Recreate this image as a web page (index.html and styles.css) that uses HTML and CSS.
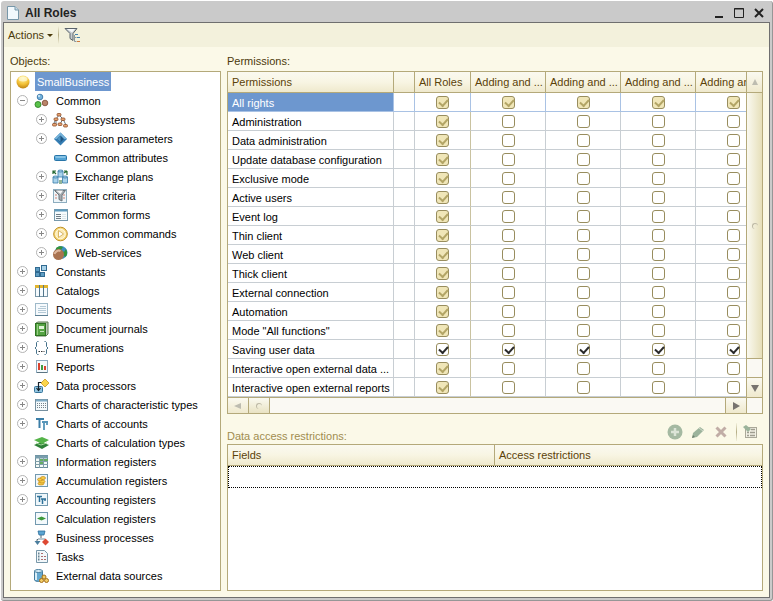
FILE: index.html
```
<!DOCTYPE html>
<html lang="en"><head>
<meta charset="utf-8">
<meta name="viewport" content="width=device-width, initial-scale=1">
<title>All Roles</title>
<link rel="stylesheet" href="styles.css"></head>

<body>
<div class="window">
<header class="titlebar">
	<svg class="icon" viewBox="0 0 16 16"><path d="M2.500 1.500h7.500l3.500 3.500v9.500h-11z" fill="#f2f9fd" stroke="#7797a9"/><path d="M10 1.500v3.500h3.500" fill="#c5dce9" stroke="#7797a9"/></svg>
	<h1>All Roles</h1>
	<button class="win-button" aria-label="Minimize"><svg viewBox="0 0 12 12"><path d="M2 10h8" stroke="#222" stroke-width="2"/></svg></button>
	<button class="win-button" aria-label="Maximize"><svg viewBox="0 0 12 12"><path d="M1.500 1.500h9v9h-9zM1 2h10" fill="none" stroke="#222"/></svg></button>
	<button class="win-button" aria-label="Close"><svg viewBox="0 0 12 12"><path d="M2 2l8 8M10 2l-8 8" stroke="#222" stroke-width="2"/></svg></button>
</header>

<div class="toolbar">
	<button class="menu-button">Actions <span class="caret"></span></button>
	<span class="separator"></span>
	<button class="tool" aria-label="Filter by subsystems"><svg class="icon" viewBox="0 0 16 16"><path d="M1 1.500h12L9 6.500v7l-3-2v-5z" fill="#c6ccd0" stroke="#59626a"/><path d="M3 2h8L8 5.500z" fill="#f6f8f9"/><path d="M10.500 8v6.500M10.500 10.500h2M10.500 14.500h2" stroke="#8b979d" fill="none"/><path d="M11 7.500h3M13 10.500h3" stroke="#4583b0"/><path d="M13 14.500h3" stroke="#d07a3c"/></svg></button>
</div>

<main class="content">
<section class="objects">
	<h2 class="caption">Objects:</h2>
	<ul class="tree">
	<li class="node root"><svg class="icon" viewBox="0 0 16 16"><defs><radialGradient id="gold" cx=".5" cy=".2" r=".8"><stop offset="0" stop-color="#fff6ae"/><stop offset=".6" stop-color="#f3c136"/><stop offset="1" stop-color="#bd8213"/></radialGradient></defs><circle cx="8" cy="8" r="6.500" fill="url(#gold)"/><ellipse cx="8" cy="5" rx="4.500" ry="2.500" fill="#fffbdc" opacity=".7"/></svg><span class="label selected">SmallBusiness</span></li>
	<li class="node"><button class="expander open" aria-label="Collapse"></button><svg class="icon" viewBox="0 0 16 16"><circle cx="7" cy="4" r="2.800" fill="#75b3dc" stroke="#2c6b9e" stroke-width=".8"/><circle cx="5" cy="11.500" r="3" fill="#5ac24a" stroke="#237a1c" stroke-width=".8"/><circle cx="12" cy="10" r="2.800" fill="#b98469" stroke="#7c4a33" stroke-width=".8"/><circle cx="6" cy="3" r="1" fill="#d7edfa"/></svg><span class="label">Common</span></li>
	<li class="node sub"><button class="expander" aria-label="Expand"></button><svg class="icon" viewBox="0 0 16 16"><path d="M7 3L4 7v6M7 3l4 4M4 7L1.500 12M8 12l3-5 3 6" fill="none" stroke="#69747c"/><g fill="#e5a373" stroke="#8f4c26" stroke-width=".8"><rect x="5" y="1.500" width="4" height="2.500" rx="1"/><rect x="2" y="6" width="4" height="2.500" rx="1"/><rect x="9" y="6" width="4" height="2.500" rx="1"/><rect x=".5" y="11.500" width="4" height="2.500" rx="1"/><rect x="6" y="11" width="4" height="2.500" rx="1"/><rect x="11.500" y="12.500" width="4" height="2.500" rx="1"/></g></svg><span class="label">Subsystems</span></li>
	<li class="node sub"><button class="expander" aria-label="Expand"></button><svg class="icon" viewBox="0 0 16 16"><path d="M8.500 1.500L15 8l-6.500 6.500L2 8z" fill="#347db3"/><path d="M8.500 1.500L15 8H2z" fill="#74b2d9"/><path d="M8.500 4.500L12 8l-3.500 3.500L5 8z" fill="#1d5483"/><path d="M8.500 5v6L5 8z" fill="#4c93c3"/></svg><span class="label">Session parameters</span></li>
	<li class="node sub"><span class="expander-space"></span><svg class="icon" viewBox="0 0 16 16"><rect x="2.500" y="5.500" width="12" height="5" rx="1" fill="#54a4d5" stroke="#2875a8"/><path d="M3.500 7h10" stroke="#b9e1f5"/></svg><span class="label">Common attributes</span></li>
	<li class="node sub"><button class="expander" aria-label="Expand"></button><svg class="icon" viewBox="0 0 16 16"><g fill="#a9d3eb" stroke="#397ba8" stroke-width=".8"><path d="M6 2v6h5V2z"/><ellipse cx="8.500" cy="2" rx="2.500" ry="1"/><path d="M1 8v6h5V8z"/><ellipse cx="3.500" cy="8" rx="2.500" ry="1"/><path d="M10.500 8v6h5V8z"/><ellipse cx="13" cy="8" rx="2.500" ry="1"/></g><path d="M1 5V2h3M1 2l3 3M15 2v4M12 2h3M12 4l3-2M7 12h3M7 14h3" fill="none" stroke="#276b35" stroke-width="1.200"/></svg><span class="label">Exchange plans</span></li>
	<li class="node sub"><button class="expander" aria-label="Expand"></button><svg class="icon" viewBox="0 0 16 16"><rect x="1.500" y="1.500" width="13" height="13" fill="#edf5f9" stroke="#8dadbf"/><path d="M3 7h2M3 10h2M11 7h2M11 10h2" stroke="#d18274"/><path d="M2.500 2.500h11L10 7v6l-3-1.500V7z" fill="#a4abb0" stroke="#6c757b"/><path d="M4 2.500h7L8.500 6z" fill="#f5f6f7"/></svg><span class="label">Filter criteria</span></li>
	<li class="node sub"><button class="expander" aria-label="Expand"></button><svg class="icon" viewBox="0 0 16 16"><rect x="2.500" y="2.500" width="13" height="11" fill="#f5fafc" stroke="#7799ac"/><path d="M3 3.500h12" stroke="#5c9abf" stroke-width="2"/><path d="M4 7.500h5M4 9.500h5M4 11.500h5" stroke="#707d86"/><path d="M10 7.500h4M10 9.500h4M10 11.500h4" stroke="#dbe5ea"/></svg><span class="label">Common forms</span></li>
	<li class="node sub"><button class="expander" aria-label="Expand"></button><svg class="icon" viewBox="0 0 16 16"><circle cx="8.500" cy="8" r="6.800" fill="#f7d97a" stroke="#bf9028"/><circle cx="8.500" cy="8" r="4.800" fill="#fbeab5" stroke="#fff9df"/><path d="M6.500 4.500L11.500 8l-5 3.500z" fill="#fff" stroke="#d9b765"/></svg><span class="label">Common commands</span></li>
	<li class="node sub"><button class="expander" aria-label="Expand"></button><svg class="icon" viewBox="0 0 16 16"><circle cx="9" cy="7.500" r="6.500" fill="#3d8fc4"/><path d="M4 3c3-2 5-2 7-1l-2 3 3 2 2-3c2 4 1 7-1 8l-3-4-6-2z" fill="#36943b"/><circle cx="6.500" cy="9.500" r="5.500" fill="#a9724f"/><path d="M2.500 9c1-3 4-4 6-3" stroke="#dfb79c" stroke-width="2" fill="none"/></svg><span class="label">Web-services</span></li>
	<li class="node"><button class="expander" aria-label="Expand"></button><svg class="icon" viewBox="0 0 16 16"><g fill="#5f9dc2" stroke="#316a91"><rect x="2.500" y="3.500" width="4" height="4"/><rect x="2.500" y="8.500" width="4" height="4"/><rect x="7.500" y="8.500" width="4" height="4"/></g><rect x="8.500" y="1.500" width="5" height="5" fill="#a9d2e8" stroke="#316a91"/></svg><span class="label">Constants</span></li>
	<li class="node"><button class="expander" aria-label="Expand"></button><svg class="icon" viewBox="0 0 16 16"><rect x="2.500" y="2.500" width="12" height="11" fill="#f5fafd" stroke="#7896a7"/><path d="M2 3.500h13" stroke="#e3b52d" stroke-width="3"/><path d="M6.500 2v12M10.500 2v12" stroke="#52768c"/></svg><span class="label">Catalogs</span></li>
	<li class="node"><button class="expander" aria-label="Expand"></button><svg class="icon" viewBox="0 0 16 16"><rect x="2.500" y="1.500" width="12" height="12" fill="#f6fafd" stroke="#9eb9c9"/><path d="M7 4.500h6M5 6.500h8M5 8.500h8M5 10.500h8" stroke="#b4c9d6"/><path d="M2 13.500h13" stroke="#5c7e92"/></svg><span class="label">Documents</span></li>
	<li class="node"><button class="expander" aria-label="Expand"></button><svg class="icon" viewBox="0 0 16 16"><path d="M3 2l2-1h10v12l-2 2H3z" fill="#bccab5" stroke="#5c7d52"/><rect x="2.500" y="2.500" width="10" height="12" fill="#56a344" stroke="#2e7422"/><path d="M4.500 3v11" stroke="#95ce82"/><rect x="6" y="5" width="5" height="3" fill="#e1f3d9"/><path d="M7 10.500h4" stroke="#c6e6bc"/></svg><span class="label">Document journals</span></li>
	<li class="node"><button class="expander" aria-label="Expand"></button><svg class="icon" viewBox="0 0 16 16"><path d="M5.500 1.500h-1l-1 1v4L2 8l1.500 1.500v4l1 1h1M11.500 1.500h1l1 1v4L15 8l-1.500 1.500v4l-1 1h-1" fill="none" stroke="#47728b"/><path d="M5.500 11.500h1.500M8 11.500h1.500M10.500 11.500h1" stroke="#333"/></svg><span class="label">Enumerations</span></li>
	<li class="node"><button class="expander" aria-label="Expand"></button><svg class="icon" viewBox="0 0 16 16"><rect x="3.500" y="1.500" width="11" height="12" fill="#f4f9fc" stroke="#8daabd"/><path d="M6 4v7M12 7v4" stroke="#d9432f" stroke-width="2"/><path d="M9 6v5" stroke="#419c42" stroke-width="2"/><path d="M4 13.500h10" stroke="#5b7482"/></svg><span class="label">Reports</span></li>
	<li class="node"><button class="expander" aria-label="Expand"></button><svg class="icon" viewBox="0 0 16 16"><rect x="1.500" y="8.500" width="8" height="6" rx="1" fill="#92c5e1" stroke="#35749b"/><path d="M5.500 4v8M3.500 10l2 2.500 2-2.500M5.500 4.500H9" fill="none" stroke="#16222a" stroke-width="1.200"/><path d="M12 1l4 4-4 4-4-4z" fill="#fbd54b" stroke="#c79924" stroke-width=".8"/></svg><span class="label">Data processors</span></li>
	<li class="node"><button class="expander" aria-label="Expand"></button><svg class="icon" viewBox="0 0 16 16"><rect x="2.500" y="2.500" width="12" height="11" fill="#f4f9fb" stroke="#7690a0"/><path d="M3 3.500h11" stroke="#7eabc5" stroke-width="2"/><path d="M4.500 6v6M6.500 6v6M8.500 6v6M10.500 6v6M12.500 6v6" stroke="#75828a" stroke-dasharray="1 1"/></svg><span class="label">Charts of characteristic types</span></li>
	<li class="node"><button class="expander" aria-label="Expand"></button><svg class="icon" viewBox="0 0 16 16"><path d="M3 3h8M6.500 3v9" stroke="#3c7ea7" stroke-width="2" fill="none"/><path d="M9 6h6M11 6v8M14 6v3" stroke="#5795b8" stroke-width="1.800" fill="none"/></svg><span class="label">Charts of accounts</span></li>
	<li class="node"><span class="expander-space"></span><svg class="icon" viewBox="0 0 16 16"><path d="M1 10l7-3 8 3-7 4z" fill="#2e8038"/><path d="M1 5l8-3 7 3-7 4z" fill="#55b449"/><path d="M3 8l5 2 6-2" fill="none" stroke="#a3d699"/></svg><span class="label">Charts of calculation types</span></li>
	<li class="node"><button class="expander" aria-label="Expand"></button><svg class="icon" viewBox="0 0 16 16"><rect x="2.500" y="1.500" width="12" height="12" fill="#f4faf7" stroke="#6b8d9c"/><path d="M2 3h13" stroke="#779dad" stroke-width="3"/><path d="M6 5h9v3h-4v3H7z" fill="#65ae61"/><path d="M6.500 2v12M10.500 2v12M2 7.500h13M2 10.500h13" stroke="#819fa9"/></svg><span class="label">Information registers</span></li>
	<li class="node"><button class="expander" aria-label="Expand"></button><svg class="icon" viewBox="0 0 16 16"><rect x="2.500" y="1.500" width="12" height="12" fill="#eff7fb" stroke="#7299af"/><g fill="#f8cf4b" stroke="#c28516" stroke-width=".7"><ellipse cx="8" cy="10.500" rx="3" ry="1.500"/><ellipse cx="9" cy="8.500" rx="3" ry="1.500"/><ellipse cx="7" cy="6.500" rx="2.500" ry="1.500"/><ellipse cx="10" cy="5" rx="2.500" ry="1.500"/></g></svg><span class="label">Accumulation registers</span></li>
	<li class="node"><button class="expander" aria-label="Expand"></button><svg class="icon" viewBox="0 0 16 16"><rect x="2.500" y="1.500" width="12" height="12" fill="#eff7fb" stroke="#7299af"/><path d="M4 4.500h5M6.500 4v6M8 7h5M9.500 7v5M12 7v2" stroke="#2e7199" stroke-width="1.500" fill="none"/></svg><span class="label">Accounting registers</span></li>
	<li class="node"><span class="expander-space"></span><svg class="icon" viewBox="0 0 16 16"><rect x="2.500" y="1.500" width="12" height="12" fill="#f3f9fc" stroke="#7299af"/><path d="M4 7.500l4.500-2 4.500 2-4.500 2z" fill="#3e9a3c"/></svg><span class="label">Calculation registers</span></li>
	<li class="node"><span class="expander-space"></span><svg class="icon" viewBox="0 0 16 16"><path d="M8 5v4M4 12V9.500h8V12" fill="none" stroke="#53646e"/><path d="M5 1h7l-1 4H6z" fill="#5ba5d2" stroke="#2c6c99" stroke-width=".8"/><path d="M5 8h7v2H5z" fill="#bac7cf"/><path d="M1.500 11h6l-3 4z" fill="#4a7d9d"/><path d="M12.500 8.500l3.500 3.500-3.500 3.500L9 12z" fill="#dd4933"/></svg><span class="label">Business processes</span></li>
	<li class="node"><span class="expander-space"></span><svg class="icon" viewBox="0 0 16 16"><path d="M3.500 1.500h8l3 3v9h-11z" fill="#f2f8fb" stroke="#7897a9"/><path d="M5 4.500h1.500M5 7.500h1.500M5 10.500h1.500" stroke="#6a8492" stroke-width="2"/><path d="M8 4.500h2M8 7.500h5M8 10.500h5" stroke="#ad6e6e" stroke-dasharray="2 1"/></svg><span class="label">Tasks</span></li>
	<li class="node"><span class="expander-space"></span><svg class="icon" viewBox="0 0 16 16"><path d="M1.500 3v9c1 2 7 2 8 0V3z" fill="#66a9d0" stroke="#467c9d"/><path d="M3 4v8" stroke="#d9eef8" stroke-width="2"/><ellipse cx="5.500" cy="3" rx="4" ry="1.500" fill="#d8edf7" stroke="#467c9d"/><g fill="#f2cd67" stroke="#a66f17"><circle cx="11" cy="9" r="2"/><circle cx="8.500" cy="12.500" r="2"/><circle cx="13.500" cy="12.500" r="2"/></g></svg><span class="label">External data sources</span></li>
	</ul>
</section>

<section class="rights">
	<h2 class="caption">Permissions:</h2>
	<div class="grid-frame">
		<div class="grid-clip">
		<table class="permissions">
			<colgroup><col class="col-name"><col class="col-gap"><col class="col-all"><col class="col-role"><col class="col-role"><col class="col-role"><col class="col-role"></colgroup>
			<thead><tr><th>Permissions</th><th></th><th>All Roles</th><th>Adding and ...</th><th>Adding and ...</th><th>Adding and ...</th><th>Adding and ...</th></tr></thead>
			<tbody id="permissionRows"></tbody>
		</table>
		</div>
		<div class="vscroll">
			<button class="scroll-button up" aria-label="Scroll up"><svg viewBox="0 0 8 8"><path d="M4 1l3 6H1z" fill="#bdbcb0"/></svg></button>
			<div class="vthumb"></div>
			<button class="scroll-button down" aria-label="Scroll down"><svg viewBox="0 0 8 8"><path d="M0 1h8L4 8z" fill="#77736f"/></svg></button>
		</div>
		<div class="hscroll">
			<button class="scroll-button" aria-label="Scroll left"><svg viewBox="0 0 8 8"><path d="M0 4l7-3v6z" fill="#bdbcb0"/></svg></button>
			<div class="hthumb"></div>
			<button class="scroll-button right" aria-label="Scroll right"><svg viewBox="0 0 8 8"><path d="M8 4L1 0v8z" fill="#77736f"/></svg></button>
		</div>
		<div class="corner"></div>
	</div>

	<div class="restrictions-bar">
		<h2 class="caption muted">Data access restrictions:</h2>
		<button class="tool" aria-label="Add" disabled><svg class="icon" viewBox="0 0 16 16"><circle cx="8" cy="8" r="7.500" fill="#a5b9a2"/><path d="M8 4v8M4 8h8" stroke="#dce4d7" stroke-width="2.500"/></svg></button>
		<button class="tool" aria-label="Edit" disabled><svg class="icon" viewBox="0 0 16 16"><path d="M3 9l7-6 4 3-7 7-5 1z" fill="#9cb39c"/><path d="M9 4l4 3" stroke="#d3dccd"/><path d="M2 14l1-3 2 2z" fill="#70806f"/></svg></button>
		<button class="tool" aria-label="Delete" disabled><svg class="icon" viewBox="0 0 16 16"><path d="M3.500 3.500l9 9M12.500 3.500l-9 9" stroke="#c1ada6" stroke-width="3"/></svg></button>
		<span class="separator"></span>
		<button class="tool" aria-label="Restriction templates" disabled><svg class="icon" viewBox="0 0 16 16"><rect x="3.500" y="3.500" width="11" height="10" fill="#f2f1e5" stroke="#aaa899"/><path d="M9 5.500h4M5 8.500h2M8 8.500h5M5 11.500h2M8 11.500h5" stroke="#9f9d90" stroke-width="1.500"/><path d="M1 3l3-2 5 4-3 3z" fill="#9bb39b"/></svg></button>
	</div>

	<div class="restrictions">
	<table>
		<thead><tr><th>Fields</th><th>Access restrictions</th></tr></thead>
		<tbody><tr><td colspan="2"></td></tr></tbody>
	</table>
	</div>
</section>
</main>
</div>

<script src="script.js"></script>
</body>
</html>
```
FILE: script.js
```
var ROLE_COLUMNS = 5;

// "own" rights are set by every role and can be edited
var permissions = [
	{ name: "All rights", selected: true },
	{ name: "Administration" },
	{ name: "Data administration" },
	{ name: "Update database configuration" },
	{ name: "Exclusive mode" },
	{ name: "Active users" },
	{ name: "Event log" },
	{ name: "Thin client" },
	{ name: "Web client" },
	{ name: "Thick client" },
	{ name: "External connection" },
	{ name: "Automation" },
	{ name: "Mode \"All functions\"" },
	{ name: "Saving user data", own: true },
	{ name: "Interactive open external data ..." },
	{ name: "Interactive open external reports" }
];

// build one checkbox of a permission row
function makeCheck(right, column) {
	var box = document.createElement("input");
	box.type = "checkbox";
	box.className = "check";
	box.setAttribute("aria-label", right.name + ", role " + (column + 1));
	box.checked = column == 0 || right.selected || right.own;
	if (!right.own && box.checked)
		box.className += " partial";
	return box;
}

var body = document.getElementById("permissionRows");
permissions.forEach(function (right) {
	var row = body.insertRow();
	if (right.selected)
		row.className = "current";
	row.insertCell().textContent = right.name;
	row.insertCell();
	for (var i = 0; i < ROLE_COLUMNS; i++)
		row.insertCell().appendChild(makeCheck(right, i));
});
```
FILE: styles.css
```
* {
	box-sizing: border-box;
}
body {
	margin: 0;
	padding: 1px 0 0 1px;
	height: 100vh;
	background: #fff;
	color: #000;
	font: 11px/18px "Liberation Sans", Arial, sans-serif;
}
button {
	padding: 0;
	border: 0;
	background: none;
	font: inherit;
	color: inherit;
}
h1, h2 {
	margin: 0;
}
svg {
	display: block;
}
.icon {
	width: 16px;
	height: 16px;
	flex: none;
}

/* window frame */
.window {
	display: flex;
	flex-direction: column;
	min-height: 100%;
	padding: 0 2px 2px;
	background: #cacaca;
	border-right: 1px solid #969696;
	border-bottom: 1px solid #969696;
	border-radius: 3px;
}
.titlebar {
	display: flex;
	align-items: center;
	gap: 8px;
	height: 21px;
	padding: 2px 5px 0 2px;
}
.titlebar h1 {
	flex: 1;
	margin-left: -4px;
	font-size: 12px;
	color: #222;
}
.win-button {
	width: 12px;
	height: 12px;
}
.toolbar {
	display: flex;
	align-items: center;
	gap: 5px;
	height: 25px;
	padding-left: 4px;
	background: #f3f1dc;
	border: 1px solid #6f6f6f;
	border-bottom: 0;
	color: #4b3a0b;
}
.menu-button {
	display: flex;
	align-items: center;
	gap: 3px;
}
.caret {
	border: 3px solid transparent;
	border-top-color: #4b3a0b;
	border-bottom: 0;
}
.separator {
	width: 1px;
	height: 18px;
	background: linear-gradient(#f3f1dc, #b5ad85, #f3f1dc);
}

.content {
	display: flex;
	flex: 1;
	gap: 6px;
	padding: 5px 6px 6px;
	background: #fbf9e8;
	border: 1px solid #6f6f6f;
	border-top: 0;
}
.caption {
	font-size: 11px;
	line-height: 18px;
	font-weight: normal;
	color: #4b3a0b;
}
.objects > .caption, .rights > .caption {
	height: 19px;
}
.rights .muted {
	flex: 1;
	color: #a08c4f;
}

/* configuration tree */
.objects {
	display: flex;
	flex-direction: column;
	width: 211px;
}
.tree {
	flex: 1;
	margin: 0;
	padding: 0;
	list-style: none;
	background: #fff;
	border: 1px solid #b4a97a;
}
.node {
	display: flex;
	align-items: center;
	gap: 5px;
	height: 19px;
	padding-left: 6px;
}
.node.sub {
	padding-left: 25px;
}
.node.root {
	padding-left: 4px;
	gap: 4px;
}
.label {
	padding: 1px 2px 0;
	line-height: 18px;
	white-space: nowrap;
}
.selected {
	background: #6d97cf;
	color: #fff;
}
.expander, .expander-space {
	width: 11px;
	height: 11px;
	flex: none;
}
.expander {
	display: grid;
	place-items: center;
}
/* round box with a plus or a minus */
.expander::before {
	content: "";
	width: 9px;
	height: 9px;
	border: 1px solid #b4b4b4;
	border-radius: 50%;
	background:
		linear-gradient(#888, #888) center / 5px 1px no-repeat,
		linear-gradient(#888, #888) center / 1px 5px no-repeat;
}
.expander.open::before {
	background: linear-gradient(#888, #888) center / 5px 1px no-repeat;
}

/* permissions grid */
.rights {
	display: flex;
	flex-direction: column;
	flex: 1;
	min-width: 0;
}
.grid-frame {
	display: grid;
	grid-template-columns: minmax(0, 1fr) 16px;
	grid-template-rows: auto 16px;
	border: 1px solid #b4a97a;
	background: #fff;
}
.grid-clip {
	overflow: hidden;
}
table {
	border-collapse: separate;
	border-spacing: 0;
	table-layout: fixed;
}
th {
	height: 21px;
	padding: 0 0 0 4px;
	background: linear-gradient(#faf9f0, #f8f5e3 50%, #efe9cd);
	border-right: 1px solid #b4a97a;
	border-bottom: 1px solid #b4a97a;
	color: #5b4208;
	font-weight: normal;
	text-align: left;
	white-space: nowrap;
}
.permissions {
	width: 543px;
}
.col-name { width: 166px; }
.col-gap { width: 21px; }
.col-all { width: 56px; }
.col-role { width: 75px; }
.permissions td {
	height: 19px;
	padding: 0;
	border-right: 1px solid #c8ced3;
	border-bottom: 1px solid #c8ced3;
	line-height: 16px;
	text-align: center;
	white-space: nowrap;
}
.permissions td:first-child {
	padding: 2px 0 0 4px;
	text-align: left;
}
.permissions td:nth-child(3) {
	border-right-color: #c9c2a0;
}
.permissions .current td {
	border-color: #a9c2e4;
}
.permissions .current td:first-child {
	background: #6d97cf;
	color: #fff;
}
.check {
	appearance: none;
	display: block;
	width: 13px;
	height: 13px;
	margin: 0 auto;
	border: 1px solid #988d5e;
	border-radius: 3px;
	background: #fff;
}
.check:checked::before {
	content: "";
	display: block;
	width: 7px;
	height: 4px;
	margin: 2px 0 0 2px;
	border: 2px solid #2b2b2b;
	border-top: 0;
	border-right: 0;
	transform: rotate(-48deg);
}
.check.partial {
	background: #f0e6b8;
}
.check.partial:checked::before {
	border-color: #b3a566;
}

/* scrollbars */
.scroll-button {
	display: grid;
	place-items: center;
	background: linear-gradient(#faf9f0, #efe9cd);
}
.scroll-button svg {
	width: 8px;
	height: 8px;
}
.vscroll {
	display: flex;
	flex-direction: column;
	border-left: 1px solid #b4a97a;
	background: #faf9f3;
}
.up {
	height: 21px;
	border-bottom: 1px solid #b4a97a;
}
.down {
	height: 20px;
	margin-top: 18px;
	border-top: 1px solid #b4a97a;
}
.vthumb {
	display: grid;
	place-items: center;
	flex: 1;
	background: linear-gradient(to right, #faf9f0, #e6dfb9);
	border-bottom: 1px solid #b4a97a;
}
.hscroll {
	display: flex;
	border-top: 1px solid #b4a97a;
	background: #faf9f3;
}
.hscroll .scroll-button, .hthumb {
	width: 21px;
	border-right: 1px solid #b4a97a;
}
.hthumb {
	display: grid;
	place-items: center;
	background: linear-gradient(#faf9f0, #e9e3c3);
}
.hscroll .right {
	width: 21px;
	margin-left: auto;
	border-left: 1px solid #b4a97a;
	border-right: 0;
}
/* grip of a thumb */
.vthumb::before, .hthumb::before {
	content: "";
	width: 5px;
	height: 5px;
	border: 1px solid #bdb9a5;
	border-right: 0;
	border-bottom: 0;
	border-radius: 3px;
}
.corner {
	border-top: 1px solid #b4a97a;
	border-left: 1px solid #b4a97a;
	background: #faf9f3;
}

/* data access restrictions */
.restrictions-bar {
	display: flex;
	align-items: center;
	gap: 7px;
	height: 30px;
	padding: 6px 5px 0 0;
}
.restrictions-bar .muted {
	padding-top: 7px;
}
.restrictions-bar .separator {
	margin-right: -2px;
}
.restrictions {
	flex: 1;
	background: #fff;
	border: 1px solid #b4a97a;
}
.restrictions table {
	width: 100%;
}
.restrictions th:last-child {
	border-right: 0;
}
.restrictions td {
	height: 22px;
	border: 1px dotted #000;
}
```
